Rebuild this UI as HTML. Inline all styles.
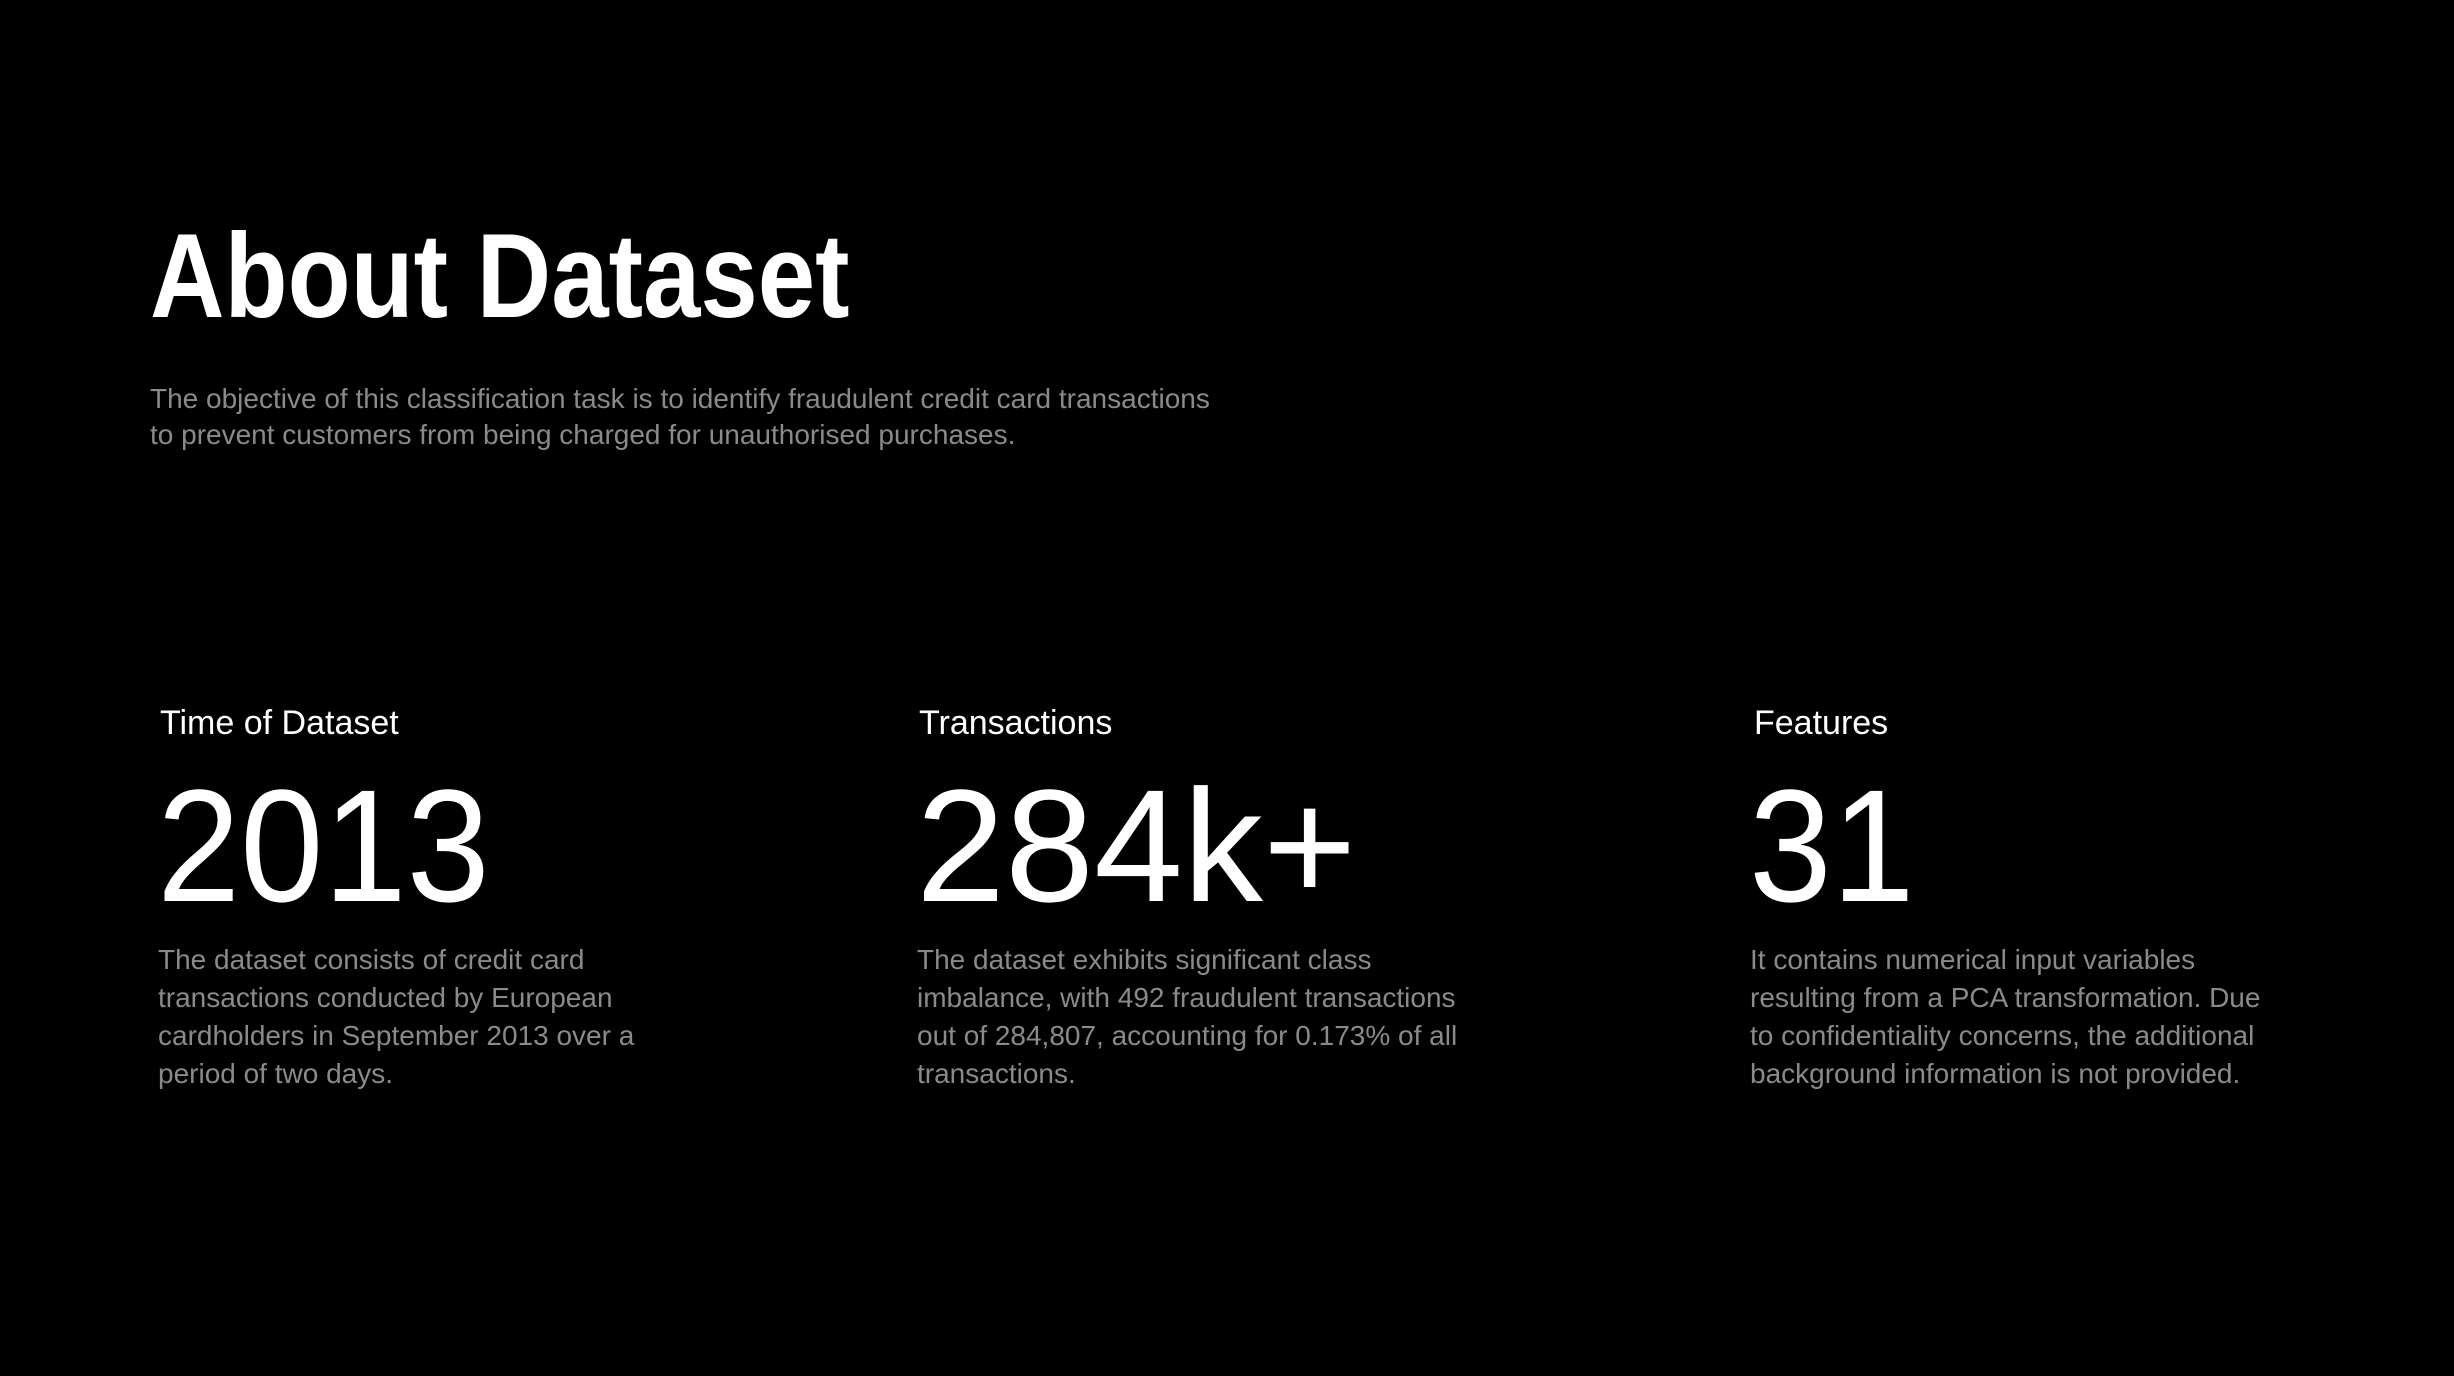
<!DOCTYPE html>
<html><head><meta charset="utf-8"><style>
html,body{margin:0;padding:0;background:#000;}
body{width:2454px;height:1376px;position:relative;overflow:hidden;font-family:"Liberation Sans",sans-serif;}
.a{position:absolute;white-space:nowrap;}
.t{left:150px;top:216px;font-size:120px;line-height:1;font-weight:bold;color:#fff;transform:scaleX(0.86);transform-origin:left top;}
.s{left:150px;top:381px;font-size:28px;line-height:36px;color:#8a8a8a;}
.l{top:706px;font-size:34px;line-height:1;color:#fff;}
.n{top:766px;font-size:160px;line-height:1;color:#fff;transform-origin:left top;}
.d{top:941px;font-size:28px;line-height:38px;color:#8a8a8a;}
</style></head><body>
<div class="a t">About Dataset</div>
<div class="a s">The objective of this classification task is to identify fraudulent credit card transactions<br>to prevent customers from being charged for unauthorised purchases.</div>

<div class="a l" style="left:160px">Time of Dataset</div>
<div class="a l" style="left:919px">Transactions</div>
<div class="a l" style="left:1754px">Features</div>

<div class="a n" style="left:157px;transform:scaleX(0.935)">2013</div>
<div class="a n" style="left:916px;transform:scaleX(1.0)">284k+</div>
<div class="a n" style="left:1749px;transform:scaleX(0.93)">31</div>

<div class="a d" style="left:158px">The dataset consists of credit card<br>transactions conducted by European<br>cardholders in September 2013 over a<br>period of two days.</div>
<div class="a d" style="left:917px">The dataset exhibits significant class<br>imbalance, with 492 fraudulent transactions<br>out of 284,807, accounting for 0.173% of all<br>transactions.</div>
<div class="a d" style="left:1750px">It contains numerical input variables<br>resulting from a PCA transformation. Due<br>to confidentiality concerns, the additional<br>background information is not provided.</div>
</body></html>
